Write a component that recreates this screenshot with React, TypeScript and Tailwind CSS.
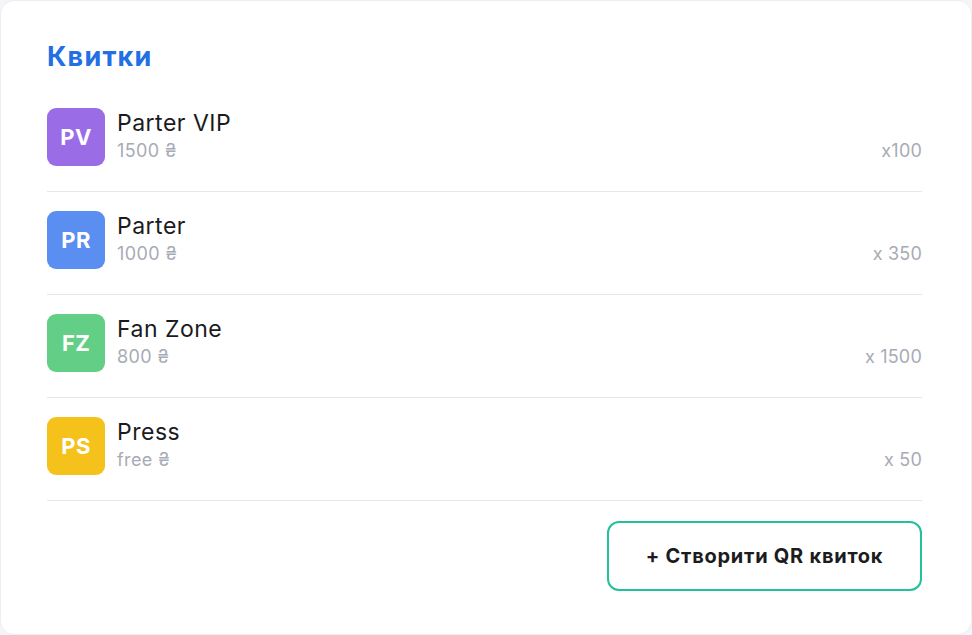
const tickets = [
  { code: 'PV', name: 'Parter VIP', price: '1500 ₴', qty: 'x100', color: 'bg-[#9a6de6]' },
  { code: 'PR', name: 'Parter', price: '1000 ₴', qty: 'x 350', color: 'bg-[#5b8ef1]' },
  { code: 'FZ', name: 'Fan Zone', price: '800 ₴', qty: 'x 1500', color: 'bg-[#63cf86]' },
  { code: 'PS', name: 'Press', price: 'free ₴', qty: 'x 50', color: 'bg-[#f5c21b]' },
];

export default function App() {
  return (
    <div className="w-[972px] h-[635px] bg-[#f4f5f8] font-['Inter',sans-serif]">
      <div className="h-full bg-white rounded-[14px] border border-[#eceef2] pl-[46px] pr-[49px] pt-[39px] flex flex-col">
        <h2 className="text-[27px] font-bold text-[#2270e3] leading-[34px] tracking-[1.2px]">Квитки</h2>

        <div className="mt-[34px] flex flex-col">
          {tickets.map((t, i) => (
            <TicketRow key={t.code} {...t} first={i === 0} />
          ))}
        </div>

        <div className="flex justify-end mt-[20px]">
          <button className="w-[315px] h-[70px] rounded-[12px] border-2 border-[#22c19a] bg-white text-[20px] font-bold text-[#1c1c1e] tracking-[0.75px]">
            + Створити QR квиток
          </button>
        </div>
      </div>
    </div>
  );
}

function TicketRow({ code, name, price, qty, color, first }: { code: string, name: string, price: string, qty: string, color: string, first: boolean }) {
  return (
    <div className={`flex items-start border-b border-[#e4e6ea] ${first ? 'pt-0' : 'pt-[19px]'} pb-[25px]`}>
      <div className={`w-[58px] h-[58px] rounded-[9px] ${color} flex items-center justify-center text-white text-[22px] font-bold tracking-[0.3px]`}>
        {code}
      </div>
      <div className="ml-[12px] flex flex-col">
        <span className="text-[23px] leading-[30px] text-[#1b1b1d] tracking-[0.5px]">{name}</span>
        <span className="mt-[2px] text-[18px] leading-[22px] text-[#a7abb5] tracking-[0.4px]">{price}</span>
      </div>
      <span className="ml-auto mt-[32px] text-[18px] leading-[22px] text-[#a7abb5] tracking-[0.2px]">{qty}</span>
    </div>
  );
}
